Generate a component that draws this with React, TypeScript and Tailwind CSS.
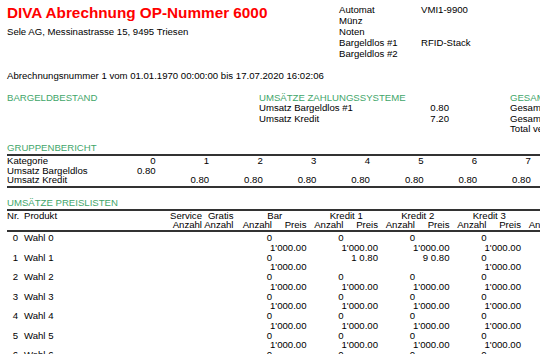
import type { ReactNode } from 'react';

const KOPF = [
  ['Automat', 'VMI1-9900'],
  ['Münz', ''],
  ['Noten', ''],
  ['Bargeldlos #1', 'RFID-Stack'],
  ['Bargeldlos #2', ''],
];

const KATEGORIEN = [0, 1, 2, 3, 4, 5, 6, 7, 8, 9];

type Zelle = { anzahl: string; preis: string };

const STANDARD: Zelle = { anzahl: '0', preis: "1'000.00" };

const PRODUKTE: { nr: number; name: string; gruppen: Zelle[] }[] = Array.from(
  { length: 8 },
  (_, i) => ({
    nr: i,
    name: `Wahl ${i}`,
    gruppen:
      i === 1
        ? [STANDARD, { anzahl: '1', preis: '0.80' }, { anzahl: '9', preis: '0.80' }, STANDARD, STANDARD]
        : [STANDARD, STANDARD, STANDARD, STANDARD, STANDARD],
  }),
);

const GRUPPEN = ['Bar', 'Kredit 1', 'Kredit 2', 'Kredit 3', 'Kredit 4'];

function Titel({ children }: { children: ReactNode }) {
  return <div className="leading-[9.75px] text-[#3fa66a]">{children}</div>;
}

function Gruppe({ zelle }: { zelle: Zelle }) {
  // lange Preise rutschen in die zweite Zeile
  if (zelle.preis.length > 5) {
    return (
      <div className="w-[71.5px] shrink-0">
        <div className="w-[37px] text-right">{zelle.anzahl}</div>
        <div className="text-right">{zelle.preis}</div>
      </div>
    );
  }
  return (
    <div className="w-[71.5px] shrink-0 text-right">
      {zelle.anzahl} {zelle.preis}
    </div>
  );
}

export default function App() {
  return (
    <div className="w-screen h-screen overflow-hidden bg-white">
      <div className="w-[800px] px-[7px] pt-[4px] whitespace-nowrap font-['Liberation_Sans',Arial,sans-serif] text-[9.6px] text-black">

        {/* Kopf */}
        <div className="flex">
          <div className="w-[332px] shrink-0">
            <h1 className="text-[15.3px] font-bold leading-[18px] text-[#ff0000]">
              DIVA Abrechnung OP-Nummer 6000
            </h1>
            <div className="mt-[3.5px] leading-[11px]">Sele AG, Messinastrasse 15, 9495 Triesen</div>
          </div>
          <div className="grid grid-cols-[82px_auto] leading-[11px]">
            {KOPF.map(([label, wert]) => (
              <div key={label} className="contents">
                <div>{label}</div>
                <div>{wert}</div>
              </div>
            ))}
          </div>
        </div>

        <div className="mt-[11px] leading-[11px]">
          Abrechnungsnummer 1 vom 01.01.1970 00:00:00 bis 17.07.2020 16:02:06
        </div>

        {/* Bestände */}
        <div className="mt-[12px] flex leading-[10.4px]">
          <div className="w-[252px] shrink-0">
            <div className="text-[#3fa66a]">BARGELDBESTAND</div>
          </div>
          <div className="w-[251px] shrink-0">
            <div className="text-[#3fa66a]">UMSÄTZE ZAHLUNGSSYSTEME</div>
            <div className="flex w-[190px] justify-between">
              <span>Umsatz Bargeldlos #1</span>
              <span>0.80</span>
            </div>
            <div className="flex w-[190px] justify-between">
              <span>Umsatz Kredit</span>
              <span>7.20</span>
            </div>
          </div>
          <div>
            <div className="text-[#3fa66a]">GESAMTUMSATZ</div>
            <div>Gesamtumsatz Bargeld</div>
            <div>Gesamtumsatz Bargeldlos</div>
            <div>Total verkaufte Produkte</div>
          </div>
        </div>

        {/* Gruppenbericht */}
        <div className="mt-[8px]">
          <Titel>GRUPPENBERICHT</Titel>
          <div className="mt-[1.3px] h-[2px] bg-[#333]" />
          <div className="mt-[0.5px] leading-[9.6px]">
            <div className="flex">
              <div className="w-[95px] shrink-0">Kategorie</div>
              {KATEGORIEN.map((k) => (
                <div key={k} className="w-[53.6px] shrink-0 text-right">{k}</div>
              ))}
            </div>
            <div className="flex">
              <div className="w-[95px] shrink-0">Umsatz Bargeldlos</div>
              {KATEGORIEN.map((k) => (
                <div key={k} className="w-[53.6px] shrink-0 text-right">{k === 0 ? '0.80' : ''}</div>
              ))}
            </div>
            <div className="flex">
              <div className="w-[95px] shrink-0">Umsatz Kredit</div>
              {KATEGORIEN.map((k) => (
                <div key={k} className="w-[53.6px] shrink-0 text-right">{k === 0 ? '' : '0.80'}</div>
              ))}
            </div>
          </div>
          <div className="mt-[1.5px] h-[1.5px] bg-[#333]" />
        </div>

        {/* Preislisten */}
        <div className="mt-[10px] leading-[9.75px]">
          <Titel>UMSÄTZE PREISLISTEN</Titel>
          <div className="mt-[1px] h-[2px] bg-[#333]" />
          <div className="flex">
            <div className="w-[13px] shrink-0">Nr.</div>
            <div className="w-[148px] shrink-0 pl-[4px]">Produkt</div>
            <div className="w-[34px] shrink-0 text-right">
              <div>Service</div>
              <div>Anzahl</div>
            </div>
            <div className="w-[33px] shrink-0 pr-[1.5px] text-right">
              <div>Gratis</div>
              <div>Anzahl</div>
            </div>
            {GRUPPEN.map((g) => (
              <div key={g} className="w-[71.5px] shrink-0">
                <div className="pl-[8px] text-center">{g}</div>
                <div className="flex">
                  <div className="w-[37px] text-right">Anzahl</div>
                  <div className="w-[34.5px] text-right">Preis</div>
                </div>
              </div>
            ))}
          </div>
          <div className="h-[1.5px] bg-[#333]" />

          <div className="mt-[1.5px]">
            {PRODUKTE.map((p) => (
              <div key={p.nr} className="flex h-[19.5px]">
                <div className="w-[13px] shrink-0 pr-[2px] text-right">{p.nr}</div>
                <div className="w-[148px] shrink-0 pl-[4px]">{p.name}</div>
                <div className="w-[34px] shrink-0" />
                <div className="w-[33px] shrink-0" />
                {p.gruppen.map((z, i) => (
                  <Gruppe key={i} zelle={z} />
                ))}
              </div>
            ))}
          </div>
        </div>
      </div>
    </div>
  );
}
